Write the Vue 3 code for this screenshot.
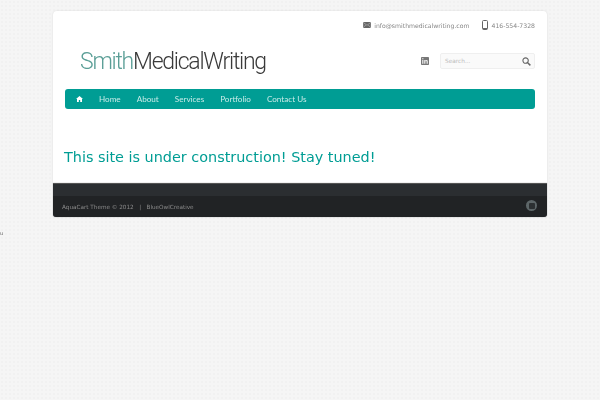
<script setup>
const links = ['Home', 'About', 'Services', 'Portfolio', 'Contact Us']
</script>

<template>
  <div class="page">
    <div class="wrap">
      <main class="card">
        <div class="contact">
          <span class="item">
            <svg width="8" height="6" viewBox="0 0 9 7"><rect width="9" height="7" rx="1.2" fill="#666" /><path d="M1 1.2L4.5 3.8L8 1.2M1 5.8L3 3.5M8 5.8L6 3.5" stroke="#ccc" stroke-width="0.6" fill="none" /></svg>
            info@smithmedicalwriting.com
          </span>
          <span class="item">
            <svg width="6" height="10" viewBox="0 0 6 10"><rect x="0.5" y="0.5" width="5" height="9" rx="1" fill="none" stroke="#666" /><rect x="1" y="8" width="4" height="1.5" fill="#666" /></svg>
            416-554-7328
          </span>
        </div>
        <div class="brandrow">
          <div class="logo"><span class="teal">Smith</span>MedicalWriting</div>
          <div class="tools">
            <svg class="li" width="8" height="8" viewBox="0 0 8 8"><rect width="8" height="8" rx="0.8" fill="#777" /><rect x="1.2" y="3" width="1.2" height="3.8" fill="#eee" /><rect x="1.2" y="1.2" width="1.2" height="1.1" fill="#eee" /><path d="M3.2 3H4.4V3.6C4.8 2.8 6.8 2.6 6.8 4.3V6.8H5.6V4.6C5.6 3.7 4.4 3.7 4.4 4.6V6.8H3.2Z" fill="#eee" /></svg>
            <div class="search">
              <span class="ph">Search...</span>
              <svg width="9" height="9" viewBox="0 0 10 10"><circle cx="4" cy="4" r="3" fill="none" stroke="#666" stroke-width="1.2" /><path d="M6.3 6.3L9.3 9.3" stroke="#666" stroke-width="1.6" /></svg>
            </div>
          </div>
        </div>
        <nav class="nav">
          <svg class="home" width="7" height="6" viewBox="0 0 7 6"><path d="M3.5 0L7 3H6V6H4.2V4H2.8V6H1V3H0Z" fill="#fff" /></svg>
          <a v-for="l in links" :key="l">{{ l }}</a>
        </nav>
        <h1>This site is under construction! Stay tuned!</h1>
      </main>
      <footer class="foot">
        <div class="foot-top"></div>
        <div class="foot-main">
          <span>AquaCart Theme © 2012 &nbsp; | &nbsp; BlueOwlCreative</span>
          <span class="badge"><span class="badge-in"></span></span>
        </div>
      </footer>
    </div>
    <div class="stray">u</div>
  </div>
</template>

<style scoped>
.page {
  width: 600px;
  height: 400px;
  background-color: #f5f5f5;
  background-image: radial-gradient(#f1f1f1 1px, transparent 1px);
  background-size: 4px 4px;
  overflow: hidden;
  padding-top: 11px;
  box-sizing: border-box;
  font-family: "DejaVu Sans", sans-serif;
  position: relative;
}
.wrap {
  width: 494px;
  margin-left: 53px;
  filter: blur(0.25px);
}
.card {
  background: #fff;
  height: 172px;
  border-radius: 4px 4px 0 0;
  box-sizing: border-box;
  padding: 9px 12px 0;
  box-shadow: 0 0 2px rgba(0, 0, 0, 0.12);
}
.contact {
  display: flex;
  justify-content: flex-end;
  gap: 13px;
  font-size: 6.15px;
  color: #858585;
  height: 10px;
  align-items: center;
}
.item {
  display: flex;
  align-items: center;
  gap: 3px;
}
.brandrow {
  display: flex;
  justify-content: space-between;
  align-items: center;
  height: 38px;
  margin-top: 12px;
  padding-left: 15px;
}
.logo {
  font-family: Roboto, sans-serif;
  font-weight: 300;
  font-size: 23px;
  color: #3a3a3a;
  letter-spacing: -1.25px;
}
.teal {
  color: #5a9e96;
}
.tools {
  display: flex;
  align-items: center;
  gap: 11px;
}
.search {
  width: 95px;
  height: 16px;
  background: #fafafa;
  border: 1px solid #efefef;
  border-radius: 2px;
  display: flex;
  align-items: center;
  justify-content: space-between;
  padding: 0 3px 0 4px;
  box-sizing: border-box;
}
.ph {
  font-size: 5.8px;
  color: #bdbdbd;
}
.nav {
  height: 20px;
  margin-top: 9px;
  background: #009d94;
  border-radius: 3px;
  display: flex;
  align-items: center;
  padding-left: 11px;
  gap: 16px;
  font-family: Lato, sans-serif;
  font-size: 8.15px;
  color: #c8ebe8;
}
h1 {
  margin: 39px 0 0 -1px;
  font-size: 14.4px;
  line-height: 18px;
  font-weight: 400;
  color: #009d94;
}
.foot {
  height: 34px;
  background: #212325;
  border-radius: 0 0 3px 3px;
  border-top: 1px solid #555;
  box-sizing: border-box;
  overflow: hidden;
  box-shadow: 0 0 1px rgba(0, 0, 0, 0.6);
}
.foot-top {
  height: 12px;
  background: #2b2e31;
}
.foot-main {
  height: 21px;
  display: flex;
  align-items: center;
  justify-content: space-between;
  padding: 0 10px 0 9px;
  font-size: 5.7px;
  color: #8a8a8a;
}
.badge {
  width: 11px;
  height: 11px;
  margin-top: -2px;
  border-radius: 50%;
  background: #5d6668;
  display: flex;
  align-items: center;
  justify-content: center;
}
.badge-in {
  width: 6px;
  height: 6px;
  background: #2c3032;
  border-radius: 1px;
}
.stray {
  position: absolute;
  left: 0;
  top: 230px;
  font-size: 5px;
  color: #666;
  filter: blur(0.2px);
}
</style>
